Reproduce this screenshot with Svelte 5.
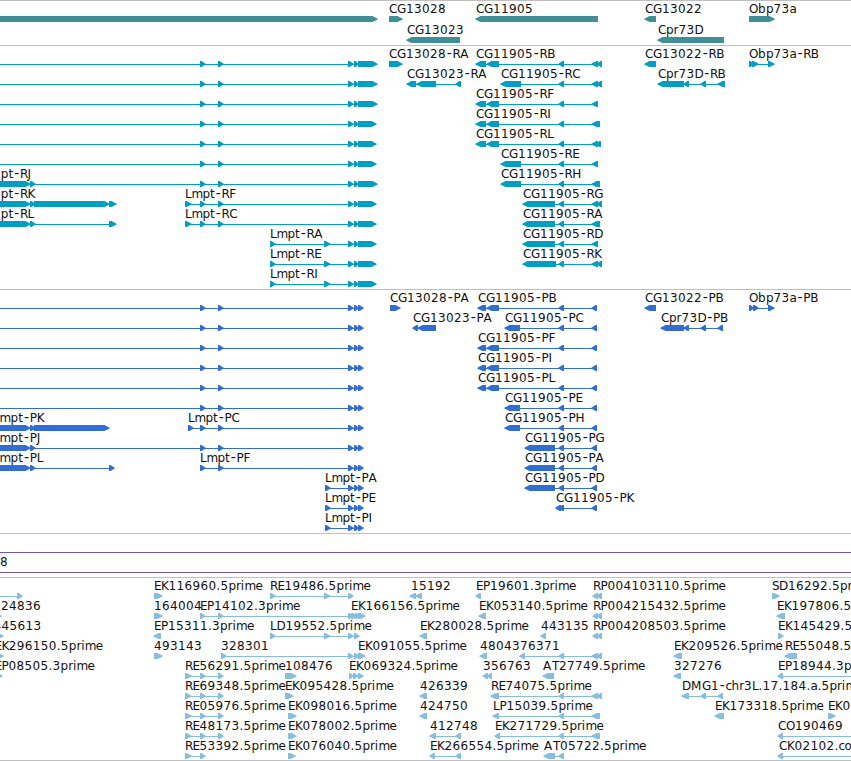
<script lang="ts">
  type Span = [number, number];

  interface Feature {
    row: number;
    strand: '+' | '-';
    exons: Span[];
    label?: string;
    labelX?: number;
    lineEnd?: number;
  }

  interface Track {
    id: string;
    name: string;
    height: number;
    pitch: number;
    features: Feature[];
  }

  const VIEW_WIDTH = 851;
  const LABEL_Y = 12;
  const BAR_Y = 15;

  // Advance of each glyph, in pixels
  const advances: Record<string, number> = {
    A: 9, B: 8, C: 8, D: 9, E: 7, F: 7, G: 9, H: 9, I: 4, J: 4, K: 7.4, L: 6.4, M: 11,
    O: 9, P: 7, R: 7.6, S: 7, T: 7, a: 7, b: 8, c: 6, e: 7, h: 7.6, i: 3.6, m: 11,
    o: 8, p: 7.6, r: 4.8, t: 5, '-': 6.6, '.': 4
  };

  function glyphPositions(text: string, start: number): string {
    let x = start;
    const xs: string[] = [];
    for (const ch of text) {
      xs.push((ch === '-' ? x + 0.8 : x).toFixed(1));
      x += advances[ch] ?? 8;
    }
    return xs.join(' ');
  }

  function arrow([a, b]: Span, strand: string): string {
    const head = Math.min(6, b - a);
    const top = BAR_Y;
    const mid = BAR_Y + 3;
    const bottom = BAR_Y + 6;
    if (strand === '+') {
      const neck = b - head + 1.5;
      return `${a},${top} ${neck},${top} ${b + 0.7},${mid - 0.3} ${b + 0.7},${mid + 0.5} ${neck},${bottom} ${a},${bottom}`;
    }
    const neck = a + head - 1.5;
    return `${b},${top} ${neck},${top} ${a - 0.7},${mid - 0.3} ${a - 0.7},${mid + 0.5} ${neck},${bottom} ${b},${bottom}`;
  }

  function feature(row: number, strand: '+' | '-', label: string, exons: Span[], labelX?: number, lineEnd?: number): Feature {
    return { row, strand, label, exons, labelX: labelX ?? exons[0][0], lineEnd };
  }

  // Exons shared by many isoforms
  const mid: Span[] = [[200, 205], [218, 223]];
  const rnaTail: Span[] = [[348, 353], [354, 358], [358, 377]];
  const rnaTailShort: Span[] = [[348, 353], [354, 358], [358, 376]];
  const pepTail: Span[] = [[348, 353], [354, 358], [358, 363]];
  const end598: Span[] = [[559, 564], [592, 598]];
  const end600: Span[] = [...end598, [596, 600]];
  const end601: Span[] = [...end598, [597, 601]];
  const end602: Span[] = [...end598, [597, 602]];
  const pepEnd: Span[] = [[559, 564], [592, 597]];
  const headB: Span[] = [[476, 486], [487, 499]];
  const pepHeadB: Span[] = [[478, 486], [487, 499]];
  const left: Span[] = [[-6, 30], [30, 35]];

  const genes: Feature[] = [
    feature(0, '+', '', [[-6, 377]]),
    feature(0, '+', 'CG13028', [[389, 402]]),
    feature(1, '-', 'CG13023', [[407, 460]]),
    feature(0, '-', 'CG11905', [[476, 598]]),
    feature(0, '-', 'CG13022', [[645, 656]]),
    feature(1, '-', 'Cpr73D', [[658, 724]]),
    feature(0, '+', 'Obp73a', [[749, 774]])
  ];

  const transcripts: Feature[] = [
    ...[0, 1, 2, 3, 4, 5].map((row) =>
      feature(row, '+', '', [[-6, -2], ...mid, ...(row > 2 ? rnaTailShort : rnaTail)])
    ),
    feature(6, '+', 'pt-RJ', [...left, ...mid, ...rnaTail], 0.8),
    feature(7, '+', 'pt-RK', [...left, [34, 109], [109, 116]], 0.8),
    feature(8, '+', 'pt-RL', [...left, [109, 116]], 0.8),
    feature(7, '+', 'Lmpt-RF', [[185, 191], ...mid, ...rnaTailShort]),
    feature(8, '+', 'Lmpt-RC', [[185, 191], ...mid, ...rnaTailShort]),
    feature(9, '+', 'Lmpt-RA', [[270, 275], [324, 330], ...rnaTailShort]),
    feature(10, '+', 'Lmpt-RE', [[270, 275], [324, 330], ...rnaTailShort]),
    feature(11, '+', 'Lmpt-RI', [[270, 275], [324, 330], ...rnaTailShort]),
    feature(0, '+', 'CG13028-RA', [[389, 402]]),
    feature(1, '-', 'CG13023-RA', [[407, 416], [417, 436], [456, 461]]),
    feature(0, '-', 'CG11905-RB', [...headB, ...end602]),
    feature(1, '-', 'CG11905-RC', [[501, 521], ...end602]),
    feature(2, '-', 'CG11905-RF', [...headB, ...end598]),
    feature(3, '-', 'CG11905-RI', [...headB, ...end600]),
    feature(4, '-', 'CG11905-RL', [...headB, ...end601]),
    feature(5, '-', 'CG11905-RE', [[501, 521], ...end598]),
    feature(6, '-', 'CG11905-RH', [[501, 521], ...end600]),
    feature(7, '-', 'CG11905-RG', [[523, 555], ...end602]),
    feature(8, '-', 'CG11905-RA', [[523, 555], ...end600]),
    feature(9, '-', 'CG11905-RD', [[523, 555], ...end598]),
    feature(10, '-', 'CG11905-RK', [[523, 556], ...end602]),
    feature(0, '-', 'CG13022-RB', [[645, 656]]),
    feature(1, '-', 'Cpr73D-RB', [[658, 684], [684, 689], [701, 706], [718, 725]]),
    feature(0, '+', 'Obp73a-RB', [[749, 753], [752, 758], [768, 774]])
  ];

  const proteins: Feature[] = [
    ...[0, 1, 2, 3, 4, 5].map((row) => feature(row, '+', '', [[-6, -2], ...mid, ...pepTail])),
    feature(6, '+', 'mpt-PK', [...left, [34, 109]], -0.4),
    feature(7, '+', 'mpt-PJ', [...left, ...mid, ...pepTail], -0.4),
    feature(8, '+', 'mpt-PL', [...left, [109, 114]], -0.4),
    feature(6, '+', 'Lmpt-PC', [[188, 193], ...mid, ...pepTail]),
    feature(8, '+', 'Lmpt-PF', [...mid, ...pepTail]),
    feature(9, '+', 'Lmpt-PA', [[325, 330], ...pepTail]),
    feature(10, '+', 'Lmpt-PE', [[325, 330], ...pepTail]),
    feature(11, '+', 'Lmpt-PI', [[325, 330], ...pepTail]),
    feature(0, '+', 'CG13028-PA', [[390, 400]]),
    feature(1, '-', 'CG13023-PA', [[413, 418], [418, 436]]),
    feature(0, '-', 'CG11905-PB', [...pepHeadB, ...pepEnd]),
    feature(1, '-', 'CG11905-PC', [[505, 520], ...pepEnd]),
    feature(2, '-', 'CG11905-PF', [...pepHeadB, ...pepEnd]),
    feature(3, '-', 'CG11905-PI', [...pepHeadB, ...pepEnd]),
    feature(4, '-', 'CG11905-PL', [...pepHeadB, ...pepEnd]),
    feature(5, '-', 'CG11905-PE', [[505, 520], ...pepEnd]),
    feature(6, '-', 'CG11905-PH', [[505, 520], ...pepEnd]),
    feature(7, '-', 'CG11905-PG', [[525, 555], ...pepEnd]),
    feature(8, '-', 'CG11905-PA', [[525, 555], ...pepEnd]),
    feature(9, '-', 'CG11905-PD', [[525, 555], ...pepEnd]),
    feature(10, '-', 'CG11905-PK', [[556, 561], ...pepEnd]),
    feature(0, '-', 'CG13022-PB', [[645, 656]]),
    feature(1, '-', 'Cpr73D-PB', [[661, 684], [684, 689], [701, 706], [718, 723]]),
    feature(0, '+', 'Obp73a-PB', [[749, 753], [753, 758], [768, 774]])
  ];

  const ests: Feature[] = [
    feature(0, '+', '', [[-6, -2], [17, 22]]),
    feature(0, '+', 'EK116960.5prime', [[154, 162]]),
    feature(0, '+', 'RE19486.5prime', [[270, 275], [324, 330], [348, 353]]),
    feature(0, '-', '15192', [[410, 416], [416, 422]], 411),
    feature(0, '-', 'EP19601.3prime', [[476, 481]]),
    feature(0, '-', 'RP004103110.5prime', [[593, 598], [597, 602]]),
    feature(0, '+', 'SD16292.5prime', [[772, 779]]),

    feature(1, '+', '24836', [[-5, 1]], 1),
    feature(1, '+', '164004', [[154, 162]]),
    feature(1, '+', 'EP14102.3prime', [...mid, [348, 352], [351, 356]]),
    feature(1, '+', 'EK166156.5prime', [[351, 356], [355, 359], [358, 365]]),
    feature(1, '-', 'EK053140.5prime', [[479, 486]]),
    feature(1, '-', 'RP004215432.5prime', [[593, 598], [597, 602]]),
    feature(1, '-', 'EK197806.5prime', [[777, 785]]),

    feature(2, '+', '445613', [[-3, 3]], -6.6),
    feature(2, '-', 'EP15311.3prime', [[154, 161]]),
    feature(2, '+', 'LD19552.5prime', [[270, 275], [324, 330], [348, 353], [354, 359]]),
    feature(2, '-', 'EK280028.5prime', [[420, 427]]),
    feature(2, '-', '443135', [[541, 546]]),
    feature(2, '-', 'RP004208503.5prime', [[593, 598], [597, 602]]),
    feature(2, '+', 'EK145429.5prime', [[778, 783]]),

    feature(3, '+', 'EK296150.5prime', [[-5, 3]], -5.6),
    feature(3, '+', '493143', [[154, 162]]),
    feature(3, '+', '328301', [[221, 226], [348, 353], [354, 359]]),
    feature(3, '+', 'EK091055.5prime', [[358, 365]]),
    feature(3, '-', '48043', [[480, 487]]),
    feature(3, '-', '76371', [[520, 525], [559, 564], [592, 598], [597, 602]]),
    feature(3, '-', 'EK209526.5prime', [[674, 682]]),
    feature(3, '-', 'RE55048.5prime', [[785, 797]]),

    feature(4, '+', 'EP08505.3prime', [[-5, 2]], -5.4),
    feature(4, '+', 'RE56291.5prime', [[185, 191], ...mid]),
    feature(4, '+', '108476', [[285, 296]]),
    feature(4, '+', 'EK069324.5prime', [[349, 353], [353, 358], [358, 363]]),
    feature(4, '-', '356763', [[483, 488], [488, 492]]),
    feature(4, '-', 'AT27749.5prime', [[543, 554]]),
    feature(4, '-', '327276', [[674, 681]]),
    feature(4, '-', 'EP18944.3prime', [[778, 783]], 778, VIEW_WIDTH),

    feature(5, '+', 'RE69348.5prime', [[185, 191], ...mid]),
    feature(5, '+', 'EK095428.5prime', [[285, 293]]),
    feature(5, '-', '426339', [[420, 427]]),
    feature(5, '-', 'RE74075.5prime', [[491, 499], [559, 564], [592, 598], [597, 602]]),
    feature(5, '-', 'DMG1-chr3L.17.184.a.5prime', [[682, 689], [701, 706], [718, 723]]),

    feature(6, '+', 'RE05976.5prime', [[185, 191], ...mid]),
    feature(6, '+', 'EK098016.5prime', [[288, 296]]),
    feature(6, '-', '424750', [[420, 427]]),
    feature(6, '-', 'LP15039.5prime', [[493, 499], ...end600]),
    feature(6, '-', 'EK173318.5prime', [[715, 724]]),
    feature(6, '+', 'EK0', [[828, 835]]),

    feature(7, '+', 'RE48173.5prime', [[185, 191], ...mid]),
    feature(7, '+', 'EK078002.5prime', [[288, 296]]),
    feature(7, '-', '412748', [[430, 436], [456, 461]]),
    feature(7, '-', 'EK271729.5prime', [[495, 500], ...end600]),
    feature(7, '-', 'CO190469', [[778, 783]], 778, VIEW_WIDTH),

    feature(8, '+', 'RE53392.5prime', [[185, 191], [200, 205]]),
    feature(8, '+', 'EK076040.5prime', [[288, 295]]),
    feature(8, '-', 'EK266554.5prime', [[430, 435], [456, 461]]),
    feature(8, '-', 'AT05722.5prime', [[544, 555], [559, 564]]),
    feature(8, '-', 'CK02102.co', [[778, 783]], 779, VIEW_WIDTH)
  ];

  const upper: Track[] = [
    { id: 'gene', name: 'Genes', height: 44, pitch: 21, features: genes },
    { id: 'transcript', name: 'Transcripts', height: 243, pitch: 20, features: transcripts },
    { id: 'protein', name: 'Proteins', height: 243, pitch: 20, features: proteins }
  ];
  const lower: Track = { id: 'est', name: 'ESTs', height: 182, pitch: 20, features: ests };
</script>

{#snippet trackView(track: Track)}
  <section class="track {track.id}">
    <svg width={VIEW_WIDTH} height={track.height}>
      {#each track.features as f}
        <g transform="translate(0 {f.row * track.pitch})">
          {#if f.exons.length > 1 || f.lineEnd}
            <rect
              class="intron"
              x={f.exons[0][0] + 2}
              y={BAR_Y + 3}
              width={(f.lineEnd ?? f.exons[f.exons.length - 1][1] - 2) - f.exons[0][0] - 2}
              height="1"
            />
          {/if}
          {#each f.exons as exon}
            <polygon points={arrow(exon, f.strand)} />
          {/each}
        </g>
      {/each}
      <!-- Labels stay above the glyphs of neighbouring rows -->
      {#each track.features as f}
        {#if f.label}
          <text x={glyphPositions(f.label, f.labelX ?? 0)} y={f.row * track.pitch + LABEL_Y}
            >{#each f.label.split('-') as part, i}{#if i > 0}<tspan class="hyphen">-</tspan>{/if}{part}{/each}</text
          >
        {/if}
      {/each}
    </svg>
  </section>
{/snippet}

<main class="browser">
  {#each upper as track}
    {@render trackView(track)}
  {/each}
  <div class="divider">
    <div class="scaffold">8</div>
  </div>
  {@render trackView(lower)}
  <div class="end"></div>
</main>

<style>
  :global(body) {
    margin: 0;
    background: #fff;
    overflow: hidden;
  }

  .browser {
    width: 851px;
    height: 761px;
    overflow: hidden;
    font-family: "DejaVu Sans", "Noto Sans", sans-serif;
    font-size: 12px;
    color: #111;
  }

  .track {
    border-top: 1px solid #bfbfbf;
  }

  svg {
    display: block;
    overflow: visible;
  }

  text {
    fill: #111;
  }

  .hyphen {
    font-family: "Liberation Sans", sans-serif;
    font-size: 15px;
  }

  .intron {
    shape-rendering: crispEdges;
  }

  .gene {
    fill: #408f96;
  }

  .transcript {
    fill: #009fc1;
  }

  .protein {
    fill: #326ecf;
  }

  .est {
    fill: #87bddf;
  }

  .divider {
    border-top: 1px solid #bfbfbf;
    padding: 18px 0 4px;
  }

  .scaffold {
    height: 19px;
    line-height: 19px;
    border-top: 1px solid #7156ab;
    border-bottom: 1px solid #7156ab;
  }

  .end {
    height: 1px;
    background: #bfbfbf;
  }
</style>
